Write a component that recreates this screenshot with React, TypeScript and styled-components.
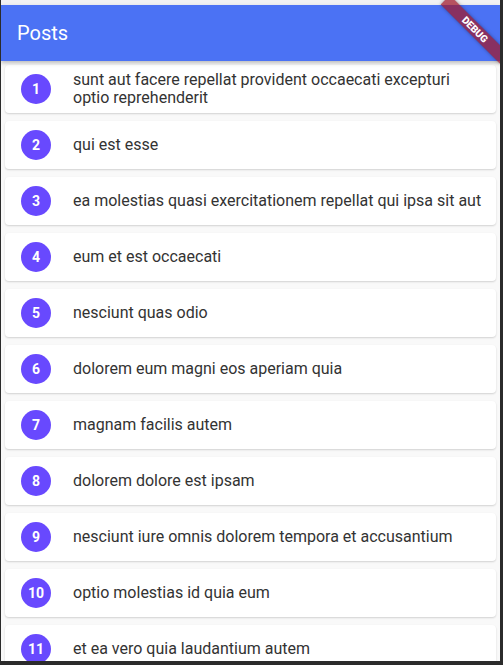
import React from 'react';
import styled, { createGlobalStyle } from 'styled-components';

const posts = [
	'sunt aut facere repellat provident occaecati excepturi optio reprehenderit',
	'qui est esse',
	'ea molestias quasi exercitationem repellat qui ipsa sit aut',
	'eum et est occaecati',
	'nesciunt quas odio',
	'dolorem eum magni eos aperiam quia',
	'magnam facilis autem',
	'dolorem dolore est ipsam',
	'nesciunt iure omnis dolorem tempora et accusantium',
	'optio molestias id quia eum',
	'et ea vero quia laudantium autem',
];

export default function App() {
	return (
		<>
			<GlobalStyle />
			<Screen>
				<TopStrip />
				<AppBar>
					<Title>Posts</Title>
				</AppBar>
				<List>
					{posts.map((title, i) => (
						<Card key={i}>
							<Avatar>{i + 1}</Avatar>
							<PostTitle>{title}</PostTitle>
						</Card>
					))}
				</List>
				<DebugBanner>DEBUG</DebugBanner>
			</Screen>
		</>
	);
}

const GlobalStyle = createGlobalStyle`
	html, body {
		margin: 0;
		padding: 0;
		background: #2b2b2b;
		height: 100%;
		overflow: hidden;
	}
`;

const Screen = styled.div`
	position: relative;
	width: 499px;
	height: 661px;
	margin-left: 1px;
	overflow: hidden;
	background: #f9f9f9;
	font-family: Roboto, 'Noto Sans', sans-serif;
`;

const TopStrip = styled.div`
	height: 5px;
	background: #f1f1f3;
`;

const AppBar = styled.header`
	height: 56px;
	display: flex;
	align-items: center;
	padding-left: 16px;
	background: #4b72f4;
	box-shadow: 0 2px 4px rgba(0, 0, 0, 0.25);
	position: relative;
	z-index: 1;
`;

const Title = styled.h1`
	margin: 0;
	color: #fff;
	font-size: 20px;
	font-weight: 400;
`;

const List = styled.div`
	display: flex;
	flex-direction: column;
	padding: 0 4px;
`;

const Card = styled.div`
	display: flex;
	align-items: center;
	height: 48px;
	margin: 4px 0;
	background: #fff;
	border-radius: 4px;
	box-shadow: 0 1px 2px rgba(0, 0, 0, 0.16);
	flex-shrink: 0;
`;

const Avatar = styled.div`
	flex: 0 0 30px;
	height: 30px;
	margin-left: 16px;
	border-radius: 50%;
	background: #6849fe;
	color: #fff;
	display: flex;
	align-items: center;
	justify-content: center;
	font-size: 14px;
	font-weight: 700;
`;

const PostTitle = styled.div`
	margin: 0 6px 0 22px;
	color: #333;
	font-size: 16px;
	line-height: 18px;
`;

const DebugBanner = styled.div`
	position: absolute;
	top: 23px;
	right: -17px;
	width: 84px;
	height: 13px;
	transform: rotate(45deg);
	background: rgba(160, 22, 40, 0.72);
	color: #fff;
	font-size: 10px;
	font-weight: 900;
	line-height: 13px;
	text-align: center;
	z-index: 2;
	box-shadow: 0 0 4px rgba(0, 0, 0, 0.35);
`;
